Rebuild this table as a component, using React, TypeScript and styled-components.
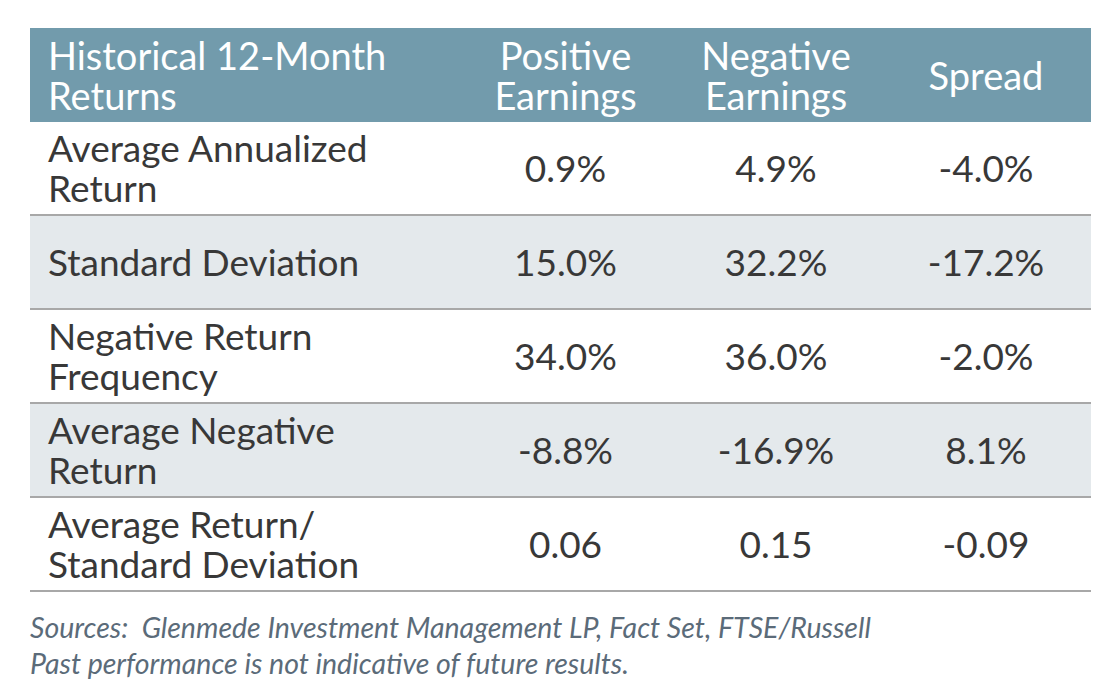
import * as React from 'react';
import styled, { createGlobalStyle } from 'styled-components';

const GlobalStyle = createGlobalStyle`
    body {
        margin: 0;
        background: #ffffff;
        font-family: Lato, 'Liberation Sans', sans-serif;
    }
`;

const Page = styled.main`
    padding: 28px 20px 0 30px;
    width: 1061px;
`;

const Table = styled.table`
    width: 1061px;
    border-collapse: collapse;
    table-layout: fixed;
`;

const HeadCell = styled.th<{ $first?: boolean }>`
    background: #729bac;
    color: #ffffff;
    font-weight: 400;
    font-size: 38px;
    line-height: 40px;
    height: 94px;
    padding: 0 0 0 ${(p) => (p.$first ? '18px' : '0')};
    text-align: ${(p) => (p.$first ? 'left' : 'center')};
    vertical-align: middle;
`;

const Row = styled.tr<{ $shaded?: boolean }>`
    background: ${(p) => (p.$shaded ? '#e4e9ec' : '#ffffff')};
`;

const Cell = styled.td<{ $first?: boolean }>`
    color: #383838;
    font-size: 37px;
    line-height: 40px;
    height: 92px;
    padding: 0 0 0 ${(p) => (p.$first ? '18px' : '0')};
    text-align: ${(p) => (p.$first ? 'left' : 'center')};
    vertical-align: middle;
    border-bottom: 2px solid #a8a8a8;
`;

const Footer = styled.p`
    margin: 17px 0 0 0;
    color: #5b6b79;
    font-style: italic;
    font-size: 28.5px;
    line-height: 36px;
    white-space: pre;
`;

const rows = [
    { label: ['Average Annualized', 'Return'], values: ['0.9%', '4.9%', '-4.0%'] },
    { label: ['Standard Deviation'], values: ['15.0%', '32.2%', '-17.2%'] },
    { label: ['Negative Return', 'Frequency'], values: ['34.0%', '36.0%', '-2.0%'] },
    { label: ['Average Negative', 'Return'], values: ['-8.8%', '-16.9%', '8.1%'] },
    { label: ['Average Return/', 'Standard Deviation'], values: ['0.06', '0.15', '-0.09'] },
];

function App(): JSX.Element {
    return (
        <Page>
            <GlobalStyle />
            <Table>
                <colgroup>
                    <col style={{ width: 430 }} />
                    <col style={{ width: 211 }} />
                    <col style={{ width: 210 }} />
                    <col style={{ width: 210 }} />
                </colgroup>
                <thead>
                    <tr>
                        <HeadCell $first>
                            Historical 12-Month
                            <br />
                            Returns
                        </HeadCell>
                        <HeadCell>
                            Positive
                            <br />
                            Earnings
                        </HeadCell>
                        <HeadCell>
                            Negative
                            <br />
                            Earnings
                        </HeadCell>
                        <HeadCell>Spread</HeadCell>
                    </tr>
                </thead>
                <tbody>
                    {rows.map((row, i) => (
                        <Row key={row.label.join(' ')} $shaded={i % 2 === 1}>
                            <Cell $first>
                                {row.label.map((line, j) => (
                                    <React.Fragment key={line}>
                                        {j > 0 && <br />}
                                        {line}
                                    </React.Fragment>
                                ))}
                            </Cell>
                            {row.values.map((v, j) => (
                                <Cell key={j}>{v}</Cell>
                            ))}
                        </Row>
                    ))}
                </tbody>
            </Table>
            <Footer>
                {'Sources:  Glenmede Investment Management LP, Fact Set, FTSE/Russell\nPast performance is not indicative of future results.'}
            </Footer>
        </Page>
    );
}

export default App;
